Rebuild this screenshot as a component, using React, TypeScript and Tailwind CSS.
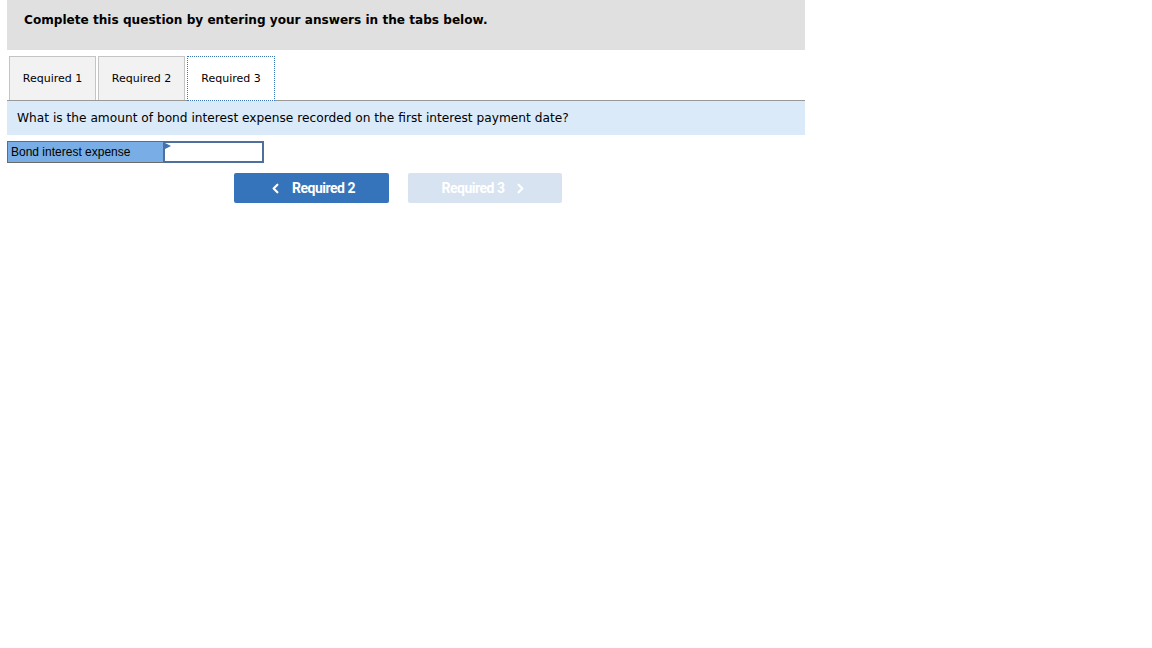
import { ChevronLeft, ChevronRight } from "lucide-react";

const tabs = ["Required 1", "Required 2", "Required 3"];

export default function App() {
  const active = 2;

  return (
    <div className="min-h-[648px] w-[1152px] bg-white font-['DejaVu_Sans',sans-serif] text-black">
      <div className="ml-[7px] w-[798px]">
        <div className="flex h-[50px] items-start bg-[#e0e0e0] px-[17px] pt-[11px] text-[12.1px] font-bold">
          Complete this question by entering your answers in the tabs below.
        </div>

        <div className="mt-[6px] flex items-end gap-[2px] border-b border-[#999] pl-[2px]">
          {tabs.map((tab, i) =>
            i === active ? (
              <div
                key={tab}
                className="-mb-px flex h-[45px] w-[88px] items-center justify-center border border-dotted border-[#3b73b9] bg-white pt-[2px] text-[11px]"
              >
                {tab}
              </div>
            ) : (
              <div
                key={tab}
                className="flex h-[44px] w-[87px] items-center justify-center border border-b-0 border-[#c4c4c4] bg-[#f2f2f2] pt-[2px] text-[11px]"
              >
                {tab}
              </div>
            )
          )}
        </div>

        <div className="flex h-[34px] items-center bg-[#daeaf8] px-[10px] pt-[1px] text-[12.2px]">
          What is the amount of bond interest expense recorded on the first interest payment date?
        </div>

        <div className="mt-[6px] flex h-[22px]">
          <div className="flex w-[157px] items-center border border-[#6b6b6b] bg-[#78aee5] pl-[3px] font-['Liberation_Sans',sans-serif] text-[12px]">
            Bond interest expense
          </div>
          <div className="relative w-[100px] border-2 border-l border-[#4f6f9c] bg-white">
            <span className="absolute left-0 top-0 h-0 w-0 border-l-[6px] border-t-[3px] border-b-[3px] border-l-[#3b73b9] border-t-transparent border-b-transparent" />
          </div>
        </div>

        <div className="mt-[10px] flex gap-[19px] pl-[227px] font-['Roboto',sans-serif] text-[14px] font-bold tracking-[-0.5px] text-white">
          <button className="flex h-[30px] w-[155px] items-center justify-center gap-[9px] rounded-[2px] bg-[#3574ba]">
            <ChevronLeft size={15} strokeWidth={3.5} />
            <span>Required 2</span>
          </button>
          <button className="flex h-[30px] w-[154px] items-center justify-center gap-[9px] rounded-[2px] bg-[#d8e3f1]">
            <span>Required 3</span>
            <ChevronRight size={15} strokeWidth={3.5} />
          </button>
        </div>
      </div>
    </div>
  );
}
